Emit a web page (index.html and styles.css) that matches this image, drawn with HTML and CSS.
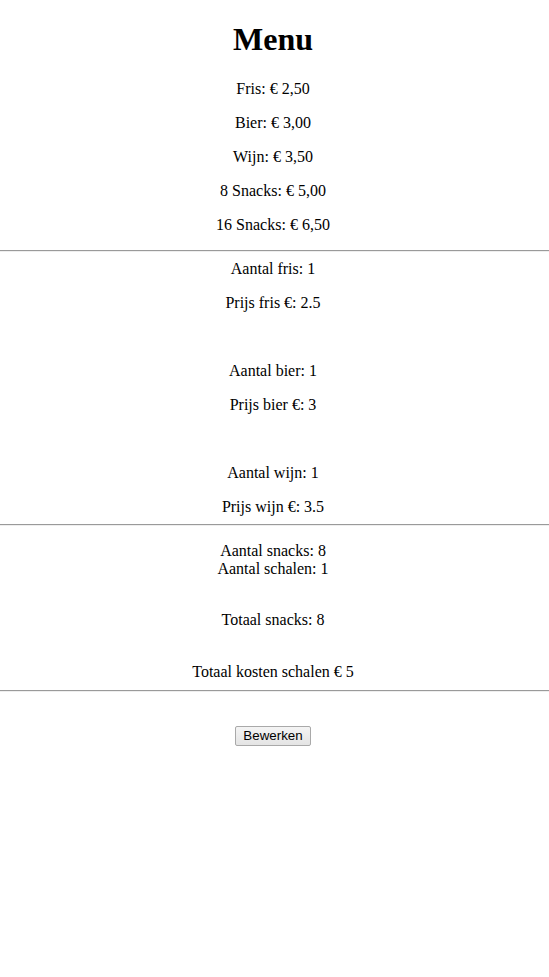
FILE: index.html
```html
<!DOCTYPE html>
<html lang="nl">
<head>
<meta charset="utf-8">
<title>Menu</title>
<link rel="stylesheet" href="styles.css">
</head>
<body>
<div class="page">
  <h1 class="title">Menu</h1>
  <div class="items">
    <p class="item">Fris: € 2,50</p>
    <p class="item">Bier: € 3,00</p>
    <p class="item">Wijn: € 3,50</p>
    <p class="item">8 Snacks: € 5,00</p>
    <p class="item">16 Snacks: € 6,50</p>
  </div>
  <hr class="rule">
  <div class="drinks">
    <div class="group">
      <div class="line">Aantal fris: 1</div>
      <div class="line price">Prijs fris €: 2.5</div>
    </div>
    <div class="group">
      <div class="line">Aantal bier: 1</div>
      <div class="line price">Prijs bier €: 3</div>
    </div>
    <div class="group">
      <div class="line">Aantal wijn: 1</div>
      <div class="line price">Prijs wijn €: 3.5</div>
    </div>
  </div>
  <hr class="rule">
  <div class="snacks">
    <div class="line">Aantal snacks: 8</div>
    <div class="line">Aantal schalen: 1</div>
    <div class="line gapped">Totaal snacks: 8</div>
    <div class="line gapped">Totaal kosten schalen € 5</div>
  </div>
  <hr class="rule">
  <div class="actions">
    <button class="btn" type="button">Bewerken</button>
  </div>
</div>
</body>
</html>
```

FILE: styles.css
```css
html, body {
  margin: 0;
  padding: 0;
  background: #ffffff;
}

.page {
  font-family: "Liberation Serif", "Times New Roman", serif;
  font-size: 16px;
  line-height: 18px;
  color: #000000;
  text-align: center;
  padding-top: 21.44px;
  padding-right: 3px;
}

.title {
  font-size: 32px;
  font-weight: bold;
  line-height: 37px;
  margin: 0 0 21.44px;
}

.items {
  display: flex;
  flex-direction: column;
  gap: 16px;
  padding-bottom: 16px;
}

.item {
  margin: 0;
}

.rule {
  margin: 0 -3px 0 0;
  height: 0;
  border: 0;
  border-top: 1px solid #9a9a9a;
  border-bottom: 1px solid #eeeeee;
}

.drinks {
  display: flex;
  flex-direction: column;
  gap: 50px;
  padding: 8px 0 8px;
}

.group {
  display: flex;
  flex-direction: column;
}

.line {
  margin: 0;
}

.price {
  margin-top: 16px;
}

.snacks {
  padding: 16px 0 9px;
}

.gapped {
  margin-top: 33.5px;
}

.actions {
  padding-top: 34px;
  display: flex;
  justify-content: center;
}

.btn {
  font-family: "Liberation Sans", Arial, sans-serif;
  font-size: 13.333px;
  line-height: 16px;
  height: 20px;
  width: 76px;
  padding: 0 6px;
  color: #000000;
  background: linear-gradient(#f4f4f4, #e4e4e4);
  border: 1px solid #a9a9a9;
  border-radius: 2px;
  cursor: pointer;
}
```
